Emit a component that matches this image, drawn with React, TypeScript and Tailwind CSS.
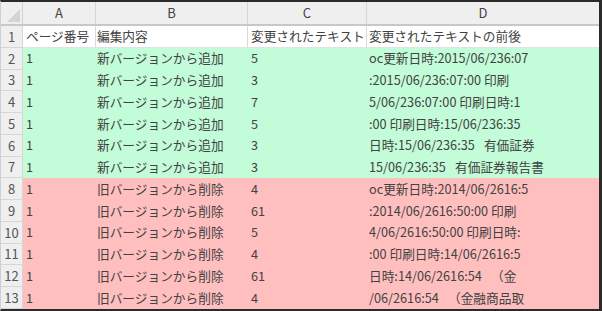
import React from "react";

const font = { fontFamily: '"Noto Sans CJK JP", "Noto Sans", sans-serif' };

type Row = { n: number; a: string; b: string; c: string; d: string; kind: "w" | "g" | "r" };

const sp = "\u2002 ";

const rows: Row[] = [
  { n: 1, a: "ページ番号", b: "編集内容", c: "変更されたテキスト", d: "変更されたテキストの前後", kind: "w" },
  { n: 2, a: "1", b: "新バージョンから追加", c: "5", d: "oc更新日時:2015/06/236:07", kind: "g" },
  { n: 3, a: "1", b: "新バージョンから追加", c: "3", d: ":2015/06/236:07:00 印刷", kind: "g" },
  { n: 4, a: "1", b: "新バージョンから追加", c: "7", d: "5/06/236:07:00 印刷日時:1", kind: "g" },
  { n: 5, a: "1", b: "新バージョンから追加", c: "5", d: ":00 印刷日時:15/06/236:35", kind: "g" },
  { n: 6, a: "1", b: "新バージョンから追加", c: "3", d: `日時:15/06/236:35${sp}有価証券`, kind: "g" },
  { n: 7, a: "1", b: "新バージョンから追加", c: "3", d: `15/06/236:35${sp}有価証券報告書`, kind: "g" },
  { n: 8, a: "1", b: "旧バージョンから削除", c: "4", d: "oc更新日時:2014/06/2616:5", kind: "r" },
  { n: 9, a: "1", b: "旧バージョンから削除", c: "61", d: ":2014/06/2616:50:00 印刷", kind: "r" },
  { n: 10, a: "1", b: "旧バージョンから削除", c: "5", d: "4/06/2616:50:00 印刷日時:", kind: "r" },
  { n: 11, a: "1", b: "旧バージョンから削除", c: "4", d: ":00 印刷日時:14/06/2616:5", kind: "r" },
  { n: 12, a: "1", b: "旧バージョンから削除", c: "61", d: `日時:14/06/2616:54${sp}（金`, kind: "r" },
  { n: 13, a: "1", b: "旧バージョンから削除", c: "4", d: `/06/2616:54${sp}（金融商品取`, kind: "r" },
];

export default function App() {
  return (
    <div
      className="w-[602px] h-[311px] overflow-hidden bg-white border-t-2 border-r-[3px] border-b-2 border-l border-t-[#2a2a2a] border-r-[#2a2a2a] border-b-[#2a2a2a] border-l-[#cfcfcf] text-[#424242] text-[12.7px]"
      style={font}
    >
      {/* column header */}
      <div className="flex h-[24px] bg-[#efefef] border-b-2 border-[#c8c8c8] text-[#444] text-[13px]">
        <div className="w-[22px] border-r border-[#d0d0d0] relative">
          <div className="absolute right-[2px] bottom-[2px] w-0 h-0 border-l-[13px] border-l-transparent border-b-[13px] border-b-[#d4d4d4]" />
        </div>
        <div className="w-[73px] border-r border-[#d6d6d6] flex items-center justify-center">A</div>
        <div className="w-[152px] border-r border-[#d6d6d6] flex items-center justify-center">B</div>
        <div className="w-[119px] border-r border-[#d6d6d6] flex items-center justify-center">C</div>
        <div className="flex-1 flex items-center justify-center">D</div>
      </div>
      {rows.map((r) => {
        const bg = r.kind === "g" ? "bg-[#c2fcd8]" : r.kind === "r" ? "bg-[#ffbfbf]" : "bg-white";
        const line = r.kind === "w" ? "border-r border-[#d9d9d9]" : "";
        return (
          <div key={r.n} className="flex h-[21.75px] leading-none">
            <div className="w-[22px] shrink-0 bg-[#efefef] border-r border-b border-[#d6d6d6] flex items-center justify-center text-[#555] text-[13px]">
              {r.n}
            </div>
            <div className={`flex flex-1 ${bg} ${r.kind === "w" ? "border-b border-[#e2e2e2]" : ""}`}>
              <div className={`w-[73px] shrink-0 pl-[3px] flex items-center whitespace-pre overflow-hidden ${line}`}>{r.a}</div>
              <div className={`w-[152px] shrink-0 pl-[1px] flex items-center whitespace-pre overflow-hidden ${line}`}>{r.b}</div>
              <div className={`w-[119px] shrink-0 pl-[3px] flex items-center whitespace-pre overflow-hidden ${line}`}>{r.c}</div>
              <div className="flex-1 pl-[2px] flex items-center whitespace-pre overflow-hidden">{r.d}</div>
            </div>
          </div>
        );
      })}
    </div>
  );
}
